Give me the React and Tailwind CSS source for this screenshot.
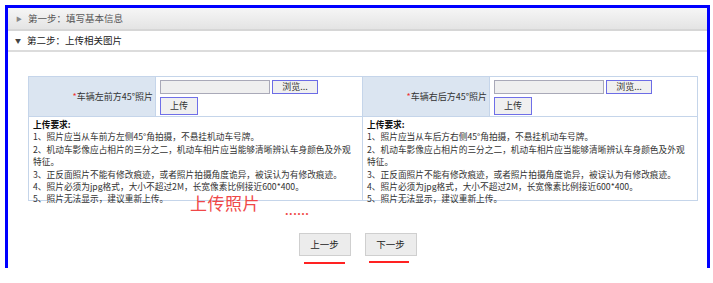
import React from 'react'

const font = { fontFamily: '"Noto Sans CJK SC", "Noto Sans", sans-serif' }

const rules = (side, dir) => [
    `1、照片应当从车${side}方${dir}侧45°角拍摄，不悬挂机动车号牌。`,
    '2、机动车影像应占相片的三分之二，机动车相片应当能够清晰辨认车身颜色及外观特征。',
    '3、正反面照片不能有修改痕迹，或者照片拍摄角度诡异，被误认为有修改痕迹。',
    '4、照片必须为jpg格式，大小不超过2M，长宽像素比例接近600*400。',
    '5、照片无法显示，建议重新上传。',
]

function UploadColumn({ label, side, dir, last }) {
    return (
        <div className="flex flex-col">
            <div className={`flex h-[41px] border border-[#c5d5ea] ${last ? 'border-l-0' : ''}`}>
                <div className="w-[127px] bg-[#dbe5f1] flex items-center justify-end pr-[2px] text-[9px] text-[#333] border-r border-[#c5d5ea]">
                    <span className="text-[#e33]">*</span>{label}
                </div>
                <div className="flex-1 flex flex-col gap-[3px] pl-[4px] pt-[3px]">
                    <div className="flex gap-[2px]">
                        <div className="w-[110px] h-[14px] bg-[#efefef] border border-[#a9a9b8]" />
                        <div className="w-[46px] h-[14px] bg-[#f0f0f0] border border-[#6c6ce6] text-[9px] leading-[12px] text-center text-[#333]">浏览...</div>
                    </div>
                    <div className="w-[38px] h-[18px] bg-[#f0f0f0] border-[1.5px] border-[#6f6fe8] text-[9px] leading-[15px] text-center text-[#333]">上传</div>
                </div>
            </div>
            <div className={`h-[84px] border border-t-0 border-[#c5d5ea] pl-[4px] pr-[8px] pt-[2px] text-[8.7px] leading-[12.4px] text-[#333] ${last ? 'border-l-0' : ''}`}>
                <div className="font-bold text-[#111]">上传要求:</div>
                {rules(side, dir).map((r) => (
                    <div key={r}>{r}</div>
                ))}
            </div>
        </div>
    )
}

export default function App() {
    return (
        <div className="bg-white w-[713px] h-[283px] pt-[5px] pl-[5px]" style={font}>
            <div className="relative w-[705px] h-[263px] border-[3px] border-b-0 border-[#0000ff] flex flex-col">
                <div className="h-[23px] flex items-center gap-[6px] pl-[8px] bg-gradient-to-b from-[#f6f6f6] to-[#e4e4e4] border-b-[2px] border-[#d6d6d6] text-[9.5px] text-[#555]">
                    <span className="text-[6px] text-[#888]">▶</span>
                    第一步：填写基本信息
                </div>
                <div className="h-[21px] flex items-center gap-[6px] pl-[7px] bg-white border-b-[2px] border-[#dcdcdc] text-[9.5px] text-[#222]">
                    <span className="text-[6px] text-[#444]">▼</span>
                    第二步：上传相关图片
                </div>
                <div className="pt-[24px] pl-[20px]">
                    <div className="grid grid-cols-[335px_335px] w-[670px]">
                        <UploadColumn label="车辆左前方45°照片" side="前" dir="左" />
                        <UploadColumn label="车辆右后方45°照片" side="后" dir="右" last />
                    </div>
                </div>
                <div className="flex justify-center gap-[14px] mt-[32px]">
                    <div className="w-[52px] h-[23px] bg-[#ececec] border border-[#cfcfcf] text-[9.5px] leading-[21px] text-center text-[#222]">上一步</div>
                    <div className="w-[52px] h-[23px] bg-[#ececec] border border-[#cfcfcf] text-[9.5px] leading-[21px] text-center text-[#222]">下一步</div>
                </div>
                <div className="absolute left-[182px] top-[186px] text-[17px] leading-[18px] text-[#f04848] tracking-[0.5px]">上传照片</div>
                <div className="absolute left-[277px] top-[196px] text-[11px] leading-[12px] font-bold text-[#f04848] tracking-[0.5px]">......</div>
                <div className="absolute left-[296px] top-[254px] w-[41px] h-[2px] bg-[#f22]" />
                <div className="absolute left-[361px] top-[253px] w-[40px] h-[2px] bg-[#f22]" />
            </div>
        </div>
    )
}
